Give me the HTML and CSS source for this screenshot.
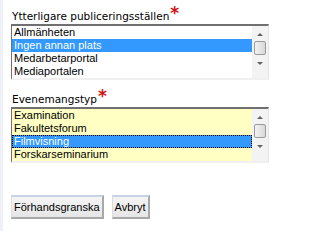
FILE: index.html
```html
<!DOCTYPE html>
<html>
<head>
<meta charset="utf-8">
<link rel="stylesheet" href="styles.css">
</head>
<body>
<div class="page">
  <div class="field">
    <div class="label">Ytterligare publiceringsställen<span class="req">*</span></div>
    <div class="listbox">
      <div class="items">
        <div class="item">Allmänheten</div>
        <div class="item sel">Ingen annan plats</div>
        <div class="item">Medarbetarportal</div>
        <div class="item">Mediaportalen</div>
      </div>
      <div class="scroll">
        <div class="arrow up"></div>
        <div class="thumb"></div>
        <div class="arrow down"></div>
      </div>
    </div>
  </div>
  <div class="field second">
    <div class="label">Evenemangstyp<span class="req">*</span></div>
    <div class="listbox yellow">
      <div class="items">
        <div class="item">Examination</div>
        <div class="item">Fakultetsforum</div>
        <div class="item sel focus">Filmvisning</div>
        <div class="item">Forskarseminarium</div>
      </div>
      <div class="scroll">
        <div class="arrow up"></div>
        <div class="thumb"></div>
        <div class="arrow down"></div>
      </div>
    </div>
  </div>
  <div class="buttons">
    <button class="btn">Förhandsgranska</button>
    <button class="btn">Avbryt</button>
  </div>
</div>
</body>
</html>
```
FILE: styles.css
```css
html, body {
  margin: 0;
  padding: 0;
  background: #fff;
}
.page {
  width: 312px;
  height: 231px;
  box-sizing: border-box;
  border-left: 3px solid #eef1f7;
  padding: 8px 0 0 8px;
  font-family: "Liberation Sans", Arial, sans-serif;
  font-size: 11px;
  color: #000;
}
.label {
  font-family: "DejaVu Sans", Verdana, sans-serif;
  font-size: 10.5px;
  height: 16px;
  line-height: 16px;
  padding-left: 1px;
}
.req {
  color: #d01010;
  font-weight: bold;
  font-size: 17px;
  line-height: 10px;
  vertical-align: top;
  margin-left: 1px;
}
.listbox {
  display: flex;
  width: 258px;
  height: 56px;
  box-sizing: border-box;
  border-top: 2px solid #707070;
  border-left: 1px solid #707070;
  border-right: 1px solid #e4e4e4;
  border-bottom: 2px solid #f0f0f0;
  background: #fff;
}
.listbox.yellow .items {
  background: #ffffc4;
}
.items {
  flex: 1;
  display: flex;
  flex-direction: column;
}
.item {
  height: 13px;
  line-height: 13px;
  padding-left: 2px;
  white-space: nowrap;
}
.item.sel {
  background: #3399ff;
  color: #fff;
}
.item.focus {
  outline: 1px dotted #000;
  outline-offset: -1px;
}
.scroll {
  width: 16px;
  display: flex;
  flex-direction: column;
  align-items: center;
  background: #f3f3f3;
}
.arrow {
  width: 16px;
  height: 16px;
  display: flex;
  align-items: center;
  justify-content: center;
}
.arrow::before {
  content: "";
  width: 0;
  height: 0;
  border-left: 3px solid transparent;
  border-right: 3px solid transparent;
}
.arrow.up::before {
  border-bottom: 3px solid #606060;
}
.arrow.down::before {
  border-top: 3px solid #606060;
}
.thumb {
  width: 12px;
  height: 14px;
  margin-top: -1px;
  box-sizing: border-box;
  border: 1px solid #9a9a9a;
  border-radius: 2px;
  background: linear-gradient(to right, #f2f2f2, #d9d9d9);
}
.second {
  margin-top: 11px;
}
.buttons {
  display: flex;
  gap: 8px;
  margin-top: 32px;
}
.btn {
  font-family: "Liberation Sans", Arial, sans-serif;
  font-size: 11px;
  height: 24px;
  padding: 0 2px;
  box-sizing: border-box;
  border-top: 2px solid #c7d3e3;
  border-left: 1px solid #dcdcdc;
  border-right: 2px solid #a8a8a8;
  border-bottom: 2px solid #a8a8a8;
  background: linear-gradient(#f4f4f4, #e6e6e6);
  color: #000;
  margin: 0;
}
```
